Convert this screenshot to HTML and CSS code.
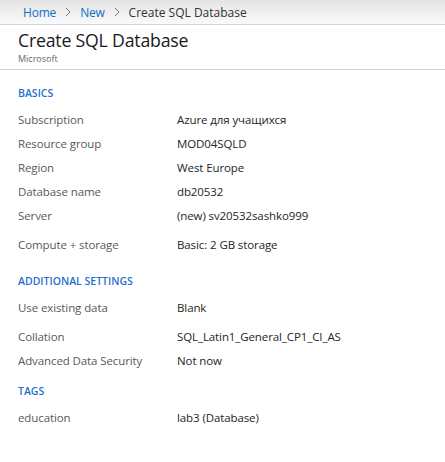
FILE: index.html
```html
<!DOCTYPE html>
<html>
<head>
<meta charset="utf-8">
<link rel="stylesheet" href="styles.css">
</head>
<body>
<nav class="crumbs">
  <a class="crumb-link">Home</a>
  <svg class="chev" viewBox="0 0 6 10" width="6" height="10"><path d="M1 1 L5 5 L1 9" fill="none" stroke="#777" stroke-width="1"/></svg>
  <a class="crumb-link">New</a>
  <svg class="chev" viewBox="0 0 6 10" width="6" height="10"><path d="M1 1 L5 5 L1 9" fill="none" stroke="#777" stroke-width="1"/></svg>
  <span class="crumb-current">Create SQL Database</span>
</nav>
<header class="head">
  <h1 class="title">Create SQL Database</h1>
  <div class="subtitle">Microsoft</div>
</header>
<main class="content">
  <h2 class="section">BASICS</h2>
  <div class="row"><span class="label">Subscription</span><span class="value">Azure для учащихся</span></div>
  <div class="row"><span class="label">Resource group</span><span class="value">MOD04SQLD</span></div>
  <div class="row"><span class="label">Region</span><span class="value">West Europe</span></div>
  <div class="row"><span class="label">Database name</span><span class="value">db20532</span></div>
  <div class="row"><span class="label">Server</span><span class="value">(new) sv20532sashko999</span></div>
  <div class="row row-gap"><span class="label">Compute + storage</span><span class="value">Basic: 2 GB storage</span></div>
  <h2 class="section section-2">ADDITIONAL SETTINGS</h2>
  <div class="row"><span class="label">Use existing data</span><span class="value">Blank</span></div>
  <div class="row row-gap"><span class="label">Collation</span><span class="value">SQL_Latin1_General_CP1_CI_AS</span></div>
  <div class="row"><span class="label">Advanced Data Security</span><span class="value">Not now</span></div>
  <h2 class="section section-3">TAGS</h2>
  <div class="row"><span class="label">education</span><span class="value">lab3 (Database)</span></div>
</main>
</body>
</html>
```
FILE: styles.css
```css
* { box-sizing: border-box; }
html, body { margin: 0; padding: 0; background: #fff; }
body {
  font-family: "Open Sans", "Noto Sans", sans-serif;
  color: #323130;
  width: 445px;
  height: 462px;
  overflow: hidden;
}
.crumbs {
  height: 25px;
  display: flex;
  align-items: center;
  gap: 9px;
  padding-left: 23px;
  background: linear-gradient(#e4e4e4, #fafafa);
  border-bottom: 1px solid #d4d4d4;
  font-size: 12px;
  letter-spacing: -0.2px;
}
.crumb-link { color: #0f6fc6; }
.crumb-current { color: #333; letter-spacing: 0; }
.chev { display: block; }
.head {
  height: 45px;
  padding: 4px 0 0 18px;
  border-bottom: 1px solid #d4d4d4;
}
.title {
  margin: 0;
  font-size: 17.7px;
  font-weight: 400;
  line-height: 22px;
  color: #1a1a1a;
  letter-spacing: -0.2px;
}
.subtitle {
  font-size: 9px;
  line-height: 12px;
  color: #666;
  margin-top: 2px;
}
.content { padding: 16px 0 0 18px; }
.section {
  margin: 0;
  font-size: 10.5px;
  font-weight: 600;
  color: #1f6fd1;
  line-height: 14px;
  height: 14px;
}
.section-2 { margin-top: 18px; }
.section-3 { margin-top: 12px; }
.row {
  display: flex;
  height: 24px;
  align-items: center;
  font-size: 11.5px;
  letter-spacing: -0.1px;
}
.section + .row { margin-top: 7px; }
.row-gap { margin-top: 5px; }
.label { width: 159px; color: #595959; }
.value { color: #252525; }
```
